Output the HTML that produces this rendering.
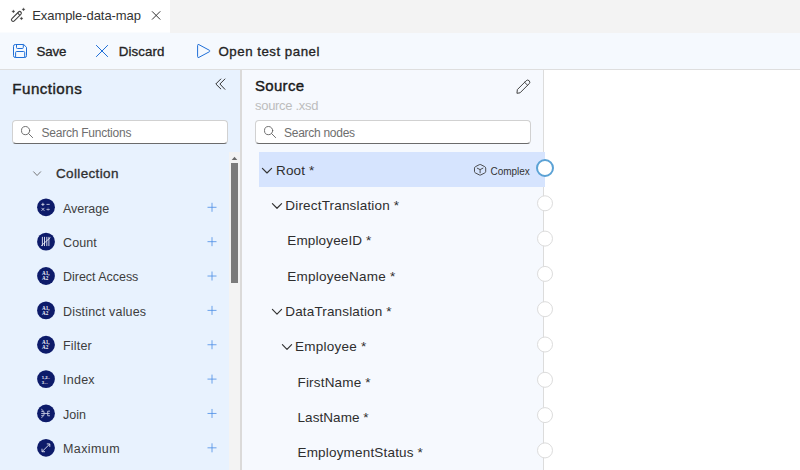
<!DOCTYPE html>
<html lang="en">
<head>
<meta charset="utf-8">
<title>Example-data-map</title>
<style>
*{box-sizing:border-box;margin:0;padding:0}
html,body{width:800px;height:470px;overflow:hidden;background:#fff}
body{font-family:"Liberation Sans",sans-serif;color:#242424;position:relative}
.t{position:absolute;white-space:nowrap;line-height:1}
svg{position:absolute;overflow:visible}
/* tab strip */
.tabs{position:absolute;left:0;top:0;width:800px;height:33px;background:#f3f3f3}
.tab{position:absolute;left:0;top:0;width:170px;height:33px;background:#fff;border-bottom:1px solid #fafcfe}
.tab .t{font-size:13px;color:#333;left:32.2px;top:9px;letter-spacing:-0.07px}
/* toolbar */
.toolbar{position:absolute;left:0;top:33px;width:800px;height:37px;background:#f5f9fe;border-bottom:1px solid #dedede}
.toolbar .t{font-size:13.3px;color:#242424;top:12.4px;-webkit-text-stroke:0.32px #242424}
/* functions panel */
.fn{position:absolute;left:0;top:70px;width:240px;height:400px;background:#e8f2fe}
.fn h2{font-size:15.2px;font-weight:400;left:12.300px;top:11px;color:#1f1f1f;letter-spacing:0.45px;-webkit-text-stroke:0.4px #1f1f1f}
.search{position:absolute;height:24px;background:#fff;border:1px solid #d1d1d1;border-bottom-color:#6b6b6b;border-radius:4px}
.search .t{font-size:12px;color:#6e6e6e;top:6.2px}
.cat{font-size:13.5px;font-weight:400;color:#303030;left:56px;top:97px;letter-spacing:0.35px;-webkit-text-stroke:0.32px #303030}
.item{position:absolute;left:0;width:229px;height:34px}
.item .ic{position:absolute;left:37px;top:8px;width:18px;height:18px}
.item .t{font-size:12.5px;color:#3d3d3d;left:63px;top:11.500px;letter-spacing:-0.3px}
.item .plus{left:206.600px;top:12px}
.sb{position:absolute;left:229px;top:82px;width:11px;height:318px;background:#f3f3f3}
.sb i{position:absolute;left:2px;top:11px;width:7px;height:119.500px;background:#7b7b7b}
.split{position:absolute;left:240px;top:70px;width:2px;height:400px;background:#dbdad9}
/* source panel */
.src{position:absolute;left:242px;top:70px;width:302px;height:400px;background:#f6f9fe;border-right:1px solid #dcdcdc}
.src h2{font-size:15px;font-weight:400;left:13px;top:8px;color:#1a1a1a;letter-spacing:0.3px;-webkit-text-stroke:0.4px #1a1a1a}
.src .sub{font-size:13px;color:#bdbdbd;left:13px;top:28.500px;letter-spacing:-0.3px}
.row{position:absolute;left:17px;width:286px;height:35px}
.row.sel{background:#d6e4fe}
.row .t{font-size:13.500px;color:#2e2e2e;top:11.500px}
.row .type{font-size:10px;color:#333;left:231.500px;top:14.600px;letter-spacing:-0.05px}
</style>
</head>
<body>
<div class="tabs">
  <div class="tab">
    <svg style="left:0;top:0" width="30" height="32" viewBox="0 0 30 32">
      <g transform="translate(16.400 16.450) rotate(-45)" fill="none" stroke="#424242" stroke-width="1.100"><rect x="-6.300" y="-1.650" width="12.600" height="3.300" rx="1.650"/><path d="M3.300-1.650v3.300"/></g>
      <g fill="#424242" stroke="#424242" stroke-width=".35" stroke-linejoin="round">
        <path d="M13.400 9.850q0 1.600 1.600 1.600q-1.600 0-1.600 1.600q0-1.600-1.600-1.600q1.600 0 1.600-1.600z"/>
        <path d="M23.500 7.800q0 1.600 1.600 1.600q-1.600 0-1.600 1.600q0-1.600-1.600-1.600q1.600 0 1.600-1.600z"/>
        <path d="M21.450 16.850q0 1.600 1.600 1.600q-1.600 0-1.600 1.600q0-1.600-1.600-1.600q1.600 0 1.600-1.600z"/>
      </g>
    </svg>
    <span class="t">Example-data-map</span>
    <svg style="left:152px;top:11px" width="9" height="9" viewBox="0 0 9 9" stroke="#333" stroke-width="1" stroke-linecap="round"><path d="M.3.600l7.700 7.700M8 .6L.3 8.300"/></svg>
  </div>
</div>
<div class="toolbar">
  <svg style="left:13px;top:11px" width="14" height="14" viewBox="0 0 14 14" fill="none" stroke="#1f6fd8" stroke-width="1" stroke-linejoin="round"><path d="M2.300.5h8.400l2.800 2.800v8.400a1.800 1.800 0 0 1-1.800 1.800H2.300a1.800 1.800 0 0 1-1.800-1.800V2.300A1.800 1.800 0 0 1 2.300.5z"/><path d="M3.500.6v2.900a1 1 0 0 0 1 1h4.800a1 1 0 0 0 1-1V.6M2.600 13.400V8.500a1 1 0 0 1 1-1h7.100a1 1 0 0 1 1 1v4.900"/></svg>
  <span class="t" style="left:36.500px;letter-spacing:-0.150px">Save</span>
  <svg style="left:96px;top:12px" width="12" height="12" viewBox="0 0 12 12" stroke="#1f6fd8" stroke-width="1" stroke-linecap="round"><path d="M.4.400l11.200 11.200M11.600.4L.4 11.600"/></svg>
  <span class="t" style="left:118.800px;letter-spacing:0.100px">Discard</span>
  <svg style="left:197px;top:11px" width="13.500" height="14" viewBox="0 0 13.500 14" fill="none" stroke="#1f6fd8" stroke-width="1" stroke-linejoin="round"><path d="M.6 1.400a.9.900 0 0 1 1.350-.75l10.400 5.600a.85.850 0 0 1 0 1.500l-10.400 5.600A.9.900 0 0 1 .6 12.600z"/></svg>
  <span class="t" style="left:218.500px;letter-spacing:0.500px">Open test panel</span>
</div>

<aside class="fn">
  <h2 class="t">Functions</h2>
  <svg style="left:215px;top:8px" width="11" height="12" viewBox="0 0 11 12" fill="none" stroke="#333" stroke-width="1" stroke-linecap="round" stroke-linejoin="round"><path d="M5.800 1L.8 6l5 4.900M9.900 1L4.900 6l5 5.300"/></svg>
  <div class="search" style="left:12px;top:50px;width:216px">
    <svg style="left:8.200px;top:5px" width="12" height="12" viewBox="0 0 12 12" fill="none" stroke="#616161" stroke-width=".9" stroke-linecap="round"><circle cx="4.600" cy="4.600" r="4.100"/><path d="M7.600 7.600l4 4"/></svg>
    <span class="t" style="left:28.500px;letter-spacing:-0.230px">Search Functions</span>
  </div>
  <svg style="left:33px;top:101px" width="9" height="6" viewBox="0 0 9 6" fill="none" stroke="#6a6a6a" stroke-width=".9" stroke-linecap="round" stroke-linejoin="round"><path d="M.6.800l3.500 3.700L7.600.800"/></svg>
  <span class="t cat">Collection</span>

  <div class="item" style="top:120px">
    <svg class="ic" width="18" height="18" viewBox="0 0 18 18"><g transform="translate(0 0.3)"><circle cx="9" cy="9" r="8.900" fill="#0d1b6a"/><path d="M4.300 6.100h3.200M5.900 4.500v3.200M9.500 6.100h3.200M4.500 9.600l2.900 2.900M7.400 9.600l-2.900 2.900M9.500 11.100h3.200M11.100 9.500v.5M11.100 12.200v.5" stroke="#eef0fa" stroke-width=".75" fill="none"/></g></svg>
    <span class="t" style="top:13px;letter-spacing:-0.03px">Average</span>
    <svg class="plus" width="10" height="10" viewBox="0 0 10 10"><path transform="translate(0 0.3)" d="M5 .5v9M.5 5h9" stroke="#4a8de6" stroke-width=".8" fill="none"/></svg>
  </div>
  <div class="item" style="top:154px">
    <svg class="ic" width="18" height="18" viewBox="0 0 18 18"><g transform="translate(0 0.66)"><circle cx="9" cy="9" r="8.900" fill="#0d1b6a"/><path d="M5.400 4.200v9.200M7.500 4.200v9.200M9.800 4.200v9.200M11.900 4.200v9.200M4.200 13.200L13.400 4.800" stroke="#f4f5fc" stroke-width=".85" fill="none"/></g></svg>
    <span class="t" style="top:13px;letter-spacing:0.1px">Count</span>
    <svg class="plus" width="10" height="10" viewBox="0 0 10 10"><path transform="translate(0 0.66)" d="M5 .5v9M.5 5h9" stroke="#4a8de6" stroke-width=".8" fill="none"/></svg>
  </div>
  <div class="item" style="top:189px">
    <svg class="ic" width="18" height="18" viewBox="0 0 18 18"><g transform="translate(0 0.02)"><circle cx="9" cy="9" r="8.900" fill="#0d1b6a"/><text x="5" y="8.400" font-family="Liberation Serif,serif" font-weight="700" font-size="5.100" fill="#f4f5fb">A1,</text><text x="5" y="13.200" font-family="Liberation Serif,serif" font-weight="700" font-size="5.100" fill="#f4f5fb">A2</text></g></svg>
    <span class="t" style="top:12px;letter-spacing:-0.03px">Direct Access</span>
    <svg class="plus" width="10" height="10" viewBox="0 0 10 10"><path transform="translate(0 0.02)" d="M5 .5v9M.5 5h9" stroke="#4a8de6" stroke-width=".8" fill="none"/></svg>
  </div>
  <div class="item" style="top:223px">
    <svg class="ic" width="18" height="18" viewBox="0 0 18 18"><g transform="translate(0 0.38)"><circle cx="9" cy="9" r="8.900" fill="#0d1b6a"/><text x="5" y="8.400" font-family="Liberation Serif,serif" font-weight="700" font-size="5.100" fill="#f4f5fb">A1,</text><text x="5" y="13.200" font-family="Liberation Serif,serif" font-weight="700" font-size="5.100" fill="#f4f5fb">A2</text></g></svg>
    <span class="t" style="top:13px;letter-spacing:0.18px">Distinct values</span>
    <svg class="plus" width="10" height="10" viewBox="0 0 10 10"><path transform="translate(0 0.38)" d="M5 .5v9M.5 5h9" stroke="#4a8de6" stroke-width=".8" fill="none"/></svg>
  </div>
  <div class="item" style="top:257px">
    <svg class="ic" width="18" height="18" viewBox="0 0 18 18"><g transform="translate(0 0.74)"><circle cx="9" cy="9" r="8.900" fill="#0d1b6a"/><text x="5" y="8.400" font-family="Liberation Serif,serif" font-weight="700" font-size="5.100" fill="#f4f5fb">A1,</text><text x="5" y="13.200" font-family="Liberation Serif,serif" font-weight="700" font-size="5.100" fill="#f4f5fb">A2</text></g></svg>
    <span class="t" style="top:13px;letter-spacing:0.18px">Filter</span>
    <svg class="plus" width="10" height="10" viewBox="0 0 10 10"><path transform="translate(0 0.74)" d="M5 .5v9M.5 5h9" stroke="#4a8de6" stroke-width=".8" fill="none"/></svg>
  </div>
  <div class="item" style="top:292px">
    <svg class="ic" width="18" height="18" viewBox="0 0 18 18"><g transform="translate(0 0.1)"><circle cx="9" cy="9" r="8.900" fill="#0d1b6a"/><text x="4.800" y="9" font-family="Liberation Sans,sans-serif" font-weight="700" font-size="4.200" fill="#f4f5fb">1,2..</text><text x="4.800" y="13.800" font-family="Liberation Sans,sans-serif" font-weight="700" font-size="4.200" fill="#f4f5fb">3...</text></g></svg>
    <span class="t" style="top:12px;letter-spacing:0.25px">Index</span>
    <svg class="plus" width="10" height="10" viewBox="0 0 10 10"><path transform="translate(0 0.1)" d="M5 .5v9M.5 5h9" stroke="#4a8de6" stroke-width=".8" fill="none"/></svg>
  </div>
  <div class="item" style="top:326px">
    <svg class="ic" width="18" height="18" viewBox="0 0 18 18"><g transform="translate(0 0.46)"><circle cx="9" cy="9" r="8.900" fill="#0d1b6a"/><path d="M4.300 4.700q3 1.400 3 4.300t-3 4.300M4.200 6.700l1.800.5M4.200 11.300l1.800-.5M4.200 9h3.100M7.300 9h3.200M13 6.700h-2.300v4.600H13M10.700 9h2" stroke="#eceef8" stroke-width=".75" fill="none"/></g></svg>
    <span class="t" style="top:13px;letter-spacing:0.02px">Join</span>
    <svg class="plus" width="10" height="10" viewBox="0 0 10 10"><path transform="translate(0 0.46)" d="M5 .5v9M.5 5h9" stroke="#4a8de6" stroke-width=".8" fill="none"/></svg>
  </div>
  <div class="item" style="top:360px">
    <svg class="ic" width="18" height="18" viewBox="0 0 18 18"><g transform="translate(0 0.82)"><circle cx="9" cy="9" r="8.900" fill="#0d1b6a"/><path d="M5.200 12.700L12.600 5.300M9.800 5.100H12.800V8.100M5 9.900V12.900H8" stroke="#f0f2fb" stroke-width=".85" fill="none"/></g></svg>
    <span class="t" style="top:13px;letter-spacing:0.4px">Maximum</span>
    <svg class="plus" width="10" height="10" viewBox="0 0 10 10"><path transform="translate(0 0.82)" d="M5 .5v9M.5 5h9" stroke="#4a8de6" stroke-width=".8" fill="none"/></svg>
  </div>
  <div class="sb"><svg style="left:2px;top:4px" width="7" height="5" viewBox="0 0 7 5"><path d="M3.500.8L6.300 4H.7z" fill="#6a6a6a"/></svg><i></i></div>
</aside>
<div class="split"></div>

<section class="src">
  <h2 class="t">Source</h2>
  <span class="t sub">source .xsd</span>
  <svg style="left:273.500px;top:8.500px" width="15" height="15" viewBox="0 0 15 15" fill="none" stroke="#3a3a3a" stroke-width=".9" stroke-linejoin="round" stroke-linecap="round"><g transform="translate(7.500 7.400) rotate(-45)"><path d="M-9.200 0l2.600-2.100H5.900a2.100 2.100 0 0 1 0 4.200H-6.600z"/><path d="M3.700-2.100v4.200"/></g></svg>
  <div class="search" style="left:13px;top:50px;width:276px">
    <svg style="left:8.200px;top:5px" width="12" height="12" viewBox="0 0 12 12" fill="none" stroke="#616161" stroke-width=".9" stroke-linecap="round"><circle cx="4.600" cy="4.600" r="4.100"/><path d="M7.600 7.600l4 4"/></svg>
    <span class="t" style="left:28px;letter-spacing:-0.270px">Search nodes</span>
  </div>
  <div class="row sel" style="top:82px"><svg class="chev" style="left:3px;top:15px" width="10" height="6" viewBox="0 0 10 6"><path transform="translate(0 0.8)" d="M.4.500L5 5.200 9.600.500" fill="none" stroke="#333" stroke-width="1.150" stroke-linecap="round" stroke-linejoin="round"/></svg><span class="t" style="left:17px;top:12px;letter-spacing:0.14px">Root *</span>
    <svg style="left:214.800px;top:12px" width="12.200" height="11.600" viewBox="0 0 12.200 11.600" fill="none" stroke="#3a3a3a" stroke-width=".9" stroke-linejoin="round"><path d="M5.300.7a1.700 1.700 0 0 1 1.600 0l3.900 2a1.600 1.600 0 0 1 .9 1.400v3.400a1.600 1.600 0 0 1-.9 1.400l-3.900 2a1.700 1.700 0 0 1-1.600 0l-3.900-2a1.600 1.600 0 0 1-.9-1.400V4.100a1.600 1.600 0 0 1 .9-1.400z"/><path d="M2.900 4l3.200 1.600L9.300 4M6.100 5.600v3.600"/></svg>
    <span class="t type">Complex</span></div>
  <div class="row" style="top:117px"><svg class="chev" style="left:13px;top:16px" width="10" height="6" viewBox="0 0 10 6"><path transform="translate(0 0.07)" d="M.4.500L5 5.200 9.600.500" fill="none" stroke="#333" stroke-width="1.150" stroke-linecap="round" stroke-linejoin="round"/></svg><span class="t" style="left:26.3px;top:12px;letter-spacing:0.18px">DirectTranslation *</span></div>
  <div class="row" style="top:153px"><span class="t" style="left:28.3px;top:11px;letter-spacing:0.14px">EmployeeID *</span></div>
  <div class="row" style="top:188px"><span class="t" style="left:28.3px;top:12px;letter-spacing:0.22px">EmployeeName *</span></div>
  <div class="row" style="top:223px"><svg class="chev" style="left:13px;top:15px" width="10" height="6" viewBox="0 0 10 6"><path transform="translate(0 0.88)" d="M.4.500L5 5.200 9.600.500" fill="none" stroke="#333" stroke-width="1.150" stroke-linecap="round" stroke-linejoin="round"/></svg><span class="t" style="left:26.3px;top:12px;letter-spacing:0.15px">DataTranslation *</span></div>
  <div class="row" style="top:258px"><svg class="chev" style="left:23px;top:16px" width="10" height="6" viewBox="0 0 10 6"><path transform="translate(0 0.15)" d="M.4.500L5 5.200 9.600.500" fill="none" stroke="#333" stroke-width="1.150" stroke-linecap="round" stroke-linejoin="round"/></svg><span class="t" style="left:36px;top:12px;letter-spacing:0.26px">Employee *</span></div>
  <div class="row" style="top:294px"><span class="t" style="left:38.5px;top:12px;letter-spacing:0.18px">FirstName *</span></div>
  <div class="row" style="top:329px"><span class="t" style="left:38.5px;top:12px;letter-spacing:0.06px">LastName *</span></div>
  <div class="row" style="top:364px"><span class="t" style="left:38.5px;top:12px;letter-spacing:0.18px">EmploymentStatus *</span></div>
  <svg class="ports" style="left:290px;top:0" width="30" height="400" viewBox="532 70 30 400">
    <circle cx="545" cy="168" r="8" fill="#fff" stroke="#5ba2d5" stroke-width="2"/>
    <circle cx="545" cy="203.3" r="7.500" fill="#fff" stroke="#dcdcdc" stroke-width="1"/>
    <circle cx="545" cy="238.6" r="7.500" fill="#fff" stroke="#dcdcdc" stroke-width="1"/>
    <circle cx="545" cy="273.9" r="7.500" fill="#fff" stroke="#dcdcdc" stroke-width="1"/>
    <circle cx="545" cy="309.2" r="7.500" fill="#fff" stroke="#dcdcdc" stroke-width="1"/>
    <circle cx="545" cy="344.5" r="7.500" fill="#fff" stroke="#dcdcdc" stroke-width="1"/>
    <circle cx="545" cy="379.8" r="7.500" fill="#fff" stroke="#dcdcdc" stroke-width="1"/>
    <circle cx="545" cy="415.1" r="7.500" fill="#fff" stroke="#dcdcdc" stroke-width="1"/>
    <circle cx="545" cy="450.4" r="7.500" fill="#fff" stroke="#dcdcdc" stroke-width="1"/>
  </svg>
</section>
</body>
</html>
